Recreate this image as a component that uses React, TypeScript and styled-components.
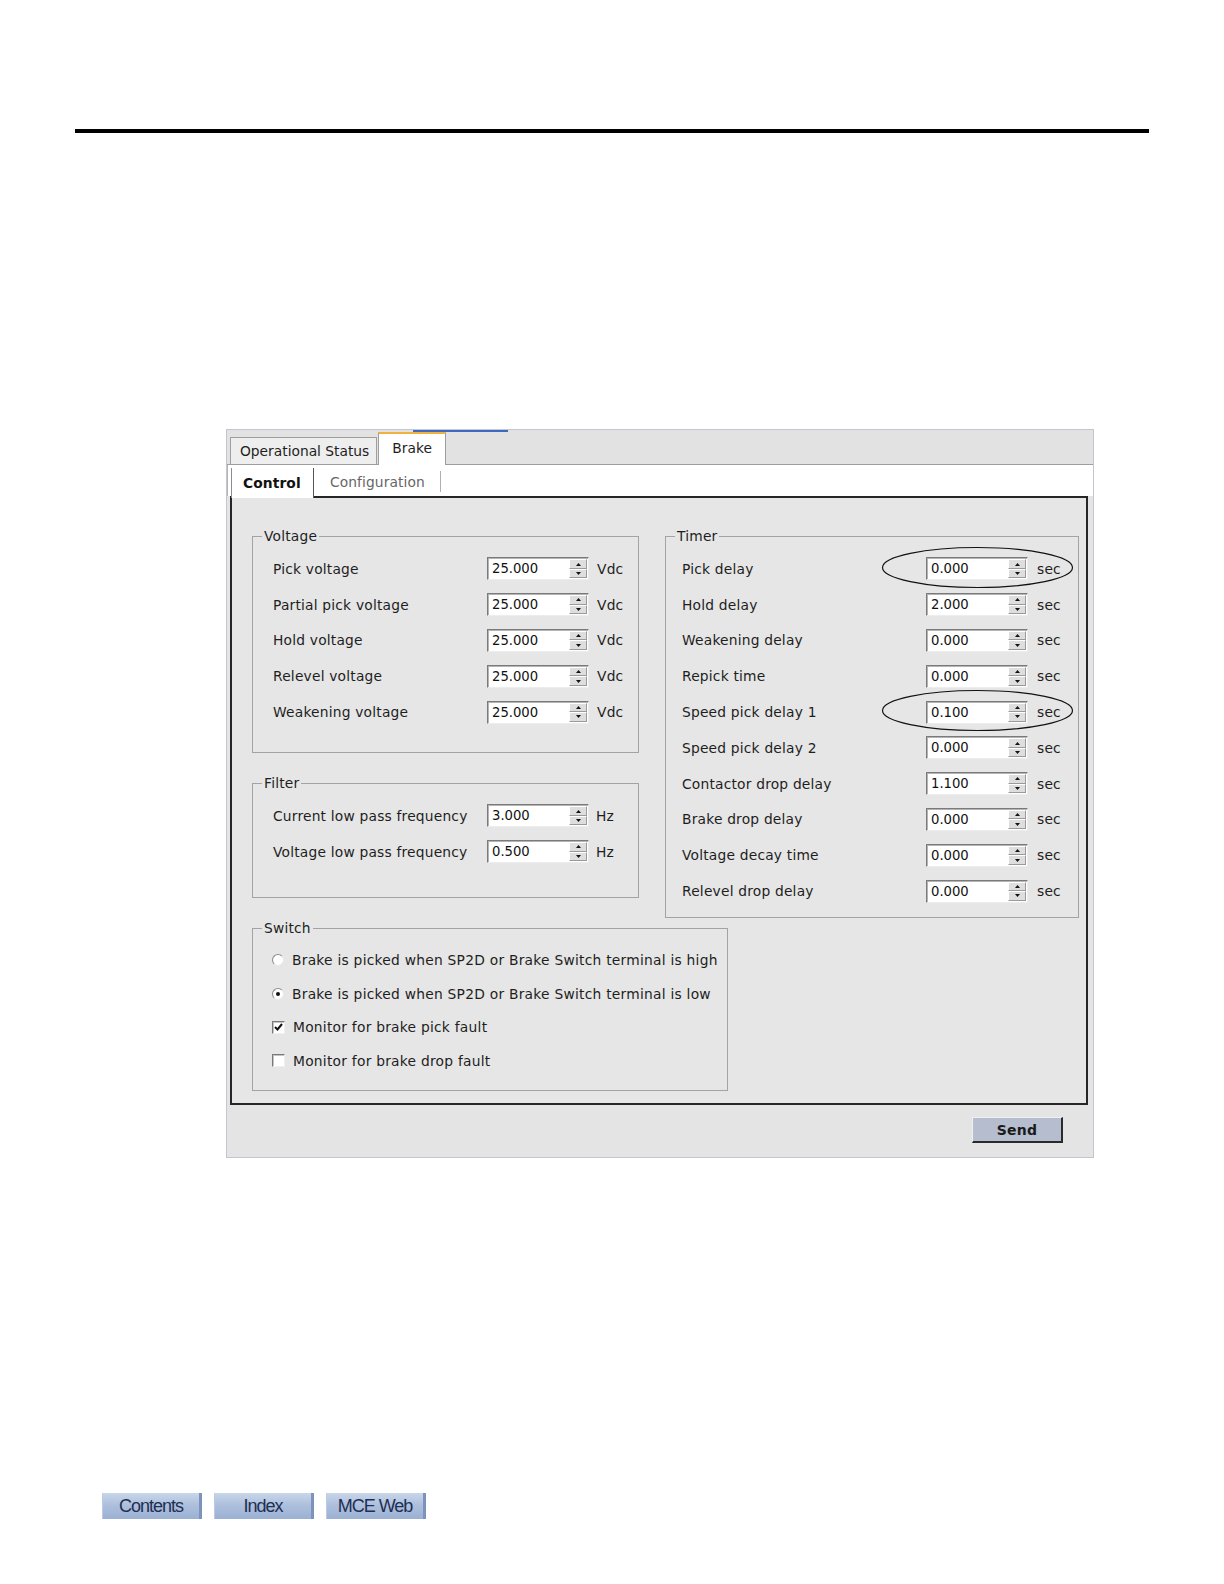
import React from "react";
import styled, { createGlobalStyle } from "styled-components";

const GlobalStyle = createGlobalStyle`
  html, body {
    margin: 0;
    padding: 0;
    background: #ffffff;
  }
  body {
    font-family: "DejaVu Sans", Verdana, sans-serif;
    color: #1e1e1e;
  }
`;

const Page = styled.div`
  width: 1224px;
  height: 1584px;
  padding-top: 129px;
  box-sizing: border-box;
`;

const Rule = styled.div`
  margin-left: 75px;
  width: 1074px;
  height: 4px;
  background: #000;
`;

const Window = styled.div`
  margin: 296px 0 0 226px;
  width: 868px;
  height: 729px;
  box-sizing: border-box;
  border: 1px solid #c3c6d0;
  background: #e4e4e4;
  display: flex;
  flex-direction: column;
  letter-spacing: 0.2px;
`;

const TabStrip = styled.div`
  height: 35px;
  box-sizing: border-box;
  display: flex;
  align-items: flex-end;
  gap: 1px;
  padding-left: 3px;
  border-bottom: 1px solid #9e9e9e;
  background:
    linear-gradient(#3d6ac0, #3d6ac0) no-repeat 186px 0 / 95px 2px,
    #e2e2e2;
`;

const TopTab = styled.div<{ active?: boolean }>`
  display: flex;
  align-items: center;
  box-sizing: border-box;
  font-size: 13.8px;
  letter-spacing: 0;
  color: #1e1e1e;
  border: 1px solid #9e9e9e;
  border-bottom: none;
  ${(p) =>
    p.active
      ? `
    height: 33px;
    margin-bottom: -1px;
    padding: 0 13px 3px 13px;
    background: #ffffff;
    border-top: 2px solid #f0b23c;
  `
      : `
    height: 27px;
    padding: 0 7px 0 9px;
    background: #eeeeee;
  `}
`;

const SubTabBar = styled.div`
  height: 31px;
  display: flex;
  align-items: stretch;
  background: #ffffff;
  padding-left: 3px;
  border-left: 1px solid #b5b5b5;
`;

const SubTab = styled.div<{ active?: boolean }>`
  display: flex;
  align-items: center;
  font-size: 13.8px;
  letter-spacing: 0.1px;
  position: relative;
  z-index: 1;
  ${(p) =>
    p.active
      ? `
    width: 83px;
    box-sizing: border-box;
    padding-left: 11px;
    font-weight: bold;
    color: #111;
    background: #ffffff;
    border-left: 1px solid #8c8c8c;
    border-right: 1px solid #555555;
    margin-top: 3px;
    margin-bottom: -2px;
  `
      : `
    padding: 0 15px 0 16px;
    color: #666666;
    border-right: 1px solid #b0b0b0;
    margin: 6px 0 4px;
  `}
`;

const Panel = styled.div`
  margin: 0 5px 0 3px;
  height: 609px;
  box-sizing: border-box;
  border: 2px solid #262626;
  background: #e6e6e6;
  padding: 30px 7px 0 20px;
  display: flex;
  flex-direction: column;
`;

const TopRow = styled.div`
  display: flex;
  align-items: flex-start;
  gap: 26px;
`;

const LeftCol = styled.div`
  display: flex;
  flex-direction: column;
  gap: 22px;
`;

const Group = styled.fieldset<{ w: number; h: number; top?: number }>`
  margin: ${(p) => p.top || 0}px 0 0 0;
  padding: 0;
  min-width: 0;
  width: ${(p) => p.w}px;
  height: ${(p) => p.h}px;
  box-sizing: border-box;
  border: 1px solid #a3a3a3;
`;

const Legend = styled.legend`
  margin-left: 9px;
  padding: 0 2px;
  font-size: 13.8px;
  line-height: 16px;
  color: #1e1e1e;
`;

const Rows = styled.div<{ gapTop: number }>`
  padding-top: ${(p) => p.gapTop}px;
`;

const Row = styled.div<{ pad: number; h: number }>`
  position: relative;
  display: flex;
  align-items: center;
  height: ${(p) => p.h}px;
  padding-left: ${(p) => p.pad}px;
  font-size: 13.8px;
`;

const Label = styled.span<{ w: number }>`
  width: ${(p) => p.w}px;
  flex: none;
  white-space: nowrap;
`;

const Unit = styled.span<{ gap: number }>`
  margin-left: ${(p) => p.gap}px;
`;

const SpinBox = styled.div`
  width: 102px;
  height: 23px;
  box-sizing: border-box;
  flex: none;
  display: flex;
  align-items: center;
  background: #ffffff;
  border: 1px solid;
  border-color: #7a7a7a #ededed #ededed #7a7a7a;
  box-shadow: inset 1px 1px 0 #b4b4b4;
`;

const SpinValue = styled.span`
  flex: 1;
  padding-left: 4px;
  font-size: 13.2px;
  color: #111;
  letter-spacing: 0;
`;

const Spinner = styled.div`
  width: 18px;
  height: 19px;
  margin-right: 1px;
  display: flex;
  flex-direction: column;
`;

const SpinButton = styled.div`
  flex: 1;
  display: flex;
  align-items: center;
  justify-content: center;
  background: #dedede;
  border: 1px solid;
  border-color: #ffffff #9a9a9a #9a9a9a #ffffff;
`;

const Ellipse = styled.svg`
  position: absolute;
  left: 216px;
  top: -4px;
  width: 191px;
  height: 41px;
  overflow: visible;
  pointer-events: none;
`;

const ChoiceRow = styled.label`
  display: flex;
  align-items: center;
  height: 33.7px;
  padding-left: 19px;
  font-size: 13.8px;
  letter-spacing: 0.25px;
  white-space: nowrap;
`;

const Radio = styled.span<{ checked?: boolean }>`
  width: 12px;
  height: 12px;
  box-sizing: border-box;
  margin-right: 8px;
  border-radius: 50%;
  background: #ffffff;
  border: 1px solid;
  border-color: #8a8a8a #e8e8e8 #e8e8e8 #8a8a8a;
  display: flex;
  align-items: center;
  justify-content: center;
  &::after {
    content: "";
    width: 4px;
    height: 4px;
    border-radius: 50%;
    background: ${(p) => (p.checked ? "#111" : "transparent")};
  }
`;

const Checkbox = styled.span`
  width: 13px;
  height: 13px;
  box-sizing: border-box;
  margin-right: 8px;
  background: #ffffff;
  border: 1px solid;
  border-color: #7a7a7a #f0f0f0 #f0f0f0 #7a7a7a;
  box-shadow: inset 1px 1px 0 #c4c4c4;
  display: flex;
  align-items: center;
  justify-content: center;
`;

const BottomBar = styled.div`
  flex: 1;
  display: flex;
  justify-content: flex-end;
  align-items: flex-start;
  padding: 12px 30px 0 0;
`;

const SendButton = styled.button`
  width: 91px;
  height: 26px;
  padding: 0;
  box-sizing: border-box;
  background: #b5bdce;
  border-style: solid;
  border-width: 1px 2px 2px 1px;
  border-color: #eef0f5 #2a2a2a #2a2a2a #eef0f5;
  font-family: "DejaVu Sans", Verdana, sans-serif;
  font-weight: bold;
  font-size: 14px;
  letter-spacing: 0.2px;
  color: #1a1a1a;
`;

const FooterNav = styled.nav`
  margin: 335px 0 0 102px;
  display: flex;
  gap: 12px;
`;

const NavButton = styled.div`
  width: 100px;
  height: 26px;
  box-sizing: border-box;
  background: linear-gradient(to bottom, #c9d6ea 0%, #adc0dd 45%, #9bb0d3 100%);
  border-left: 1px solid #bccbe2;
  border-right: 3px solid #7d93bb;
  font-family: "Liberation Sans", Arial, sans-serif;
  font-size: 18px;
  letter-spacing: -1px;
  line-height: 26px;
  text-align: center;
  color: #1f2f52;
`;

type Field = { label: string; value: string; circled?: boolean };

const voltage: Field[] = [
  { label: "Pick voltage", value: "25.000" },
  { label: "Partial pick voltage", value: "25.000" },
  { label: "Hold voltage", value: "25.000" },
  { label: "Relevel voltage", value: "25.000" },
  { label: "Weakening voltage", value: "25.000" },
];

const filter: Field[] = [
  { label: "Current low pass frequency", value: "3.000" },
  { label: "Voltage low pass frequency", value: "0.500" },
];

const timer: Field[] = [
  { label: "Pick delay", value: "0.000", circled: true },
  { label: "Hold delay", value: "2.000" },
  { label: "Weakening delay", value: "0.000" },
  { label: "Repick time", value: "0.000" },
  { label: "Speed pick delay 1", value: "0.100", circled: true },
  { label: "Speed pick delay 2", value: "0.000" },
  { label: "Contactor drop delay", value: "1.100" },
  { label: "Brake drop delay", value: "0.000" },
  { label: "Voltage decay time", value: "0.000" },
  { label: "Relevel drop delay", value: "0.000" },
];

const Arrow = ({ up }: { up?: boolean }) => (
  <svg width="5" height="3" viewBox="0 0 5 3">
    <polygon points={up ? "2.5,0 5,3 0,3" : "0,0 5,0 2.5,3"} fill="#111" />
  </svg>
);

const NumberField = ({ value }: { value: string }) => (
  <SpinBox>
    <SpinValue>{value}</SpinValue>
    <Spinner>
      <SpinButton>
        <Arrow up />
      </SpinButton>
      <SpinButton>
        <Arrow />
      </SpinButton>
    </Spinner>
  </SpinBox>
);

const FieldRows = ({
  fields,
  unit,
  pad,
  labelWidth,
  unitGap,
}: {
  fields: Field[];
  unit: string;
  pad: number;
  labelWidth: number;
  unitGap: number;
}) => (
  <Rows gapTop={7}>
    {fields.map((f) => (
      <Row key={f.label} pad={pad} h={35.8}>
        <Label w={labelWidth}>{f.label}</Label>
        <NumberField value={f.value} />
        <Unit gap={unitGap}>{unit}</Unit>
        {f.circled && (
          <Ellipse viewBox="0 0 191 41">
            <ellipse cx="95.5" cy="20.5" rx="95" ry="20" fill="none" stroke="#111" strokeWidth="1.2" />
          </Ellipse>
        )}
      </Row>
    ))}
  </Rows>
);

export default function App() {
  return (
    <Page>
      <GlobalStyle />
      <Rule />
      <Window>
        <TabStrip>
          <TopTab>Operational Status</TopTab>
          <TopTab active>Brake</TopTab>
        </TabStrip>
        <SubTabBar>
          <SubTab active>Control</SubTab>
          <SubTab>Configuration</SubTab>
        </SubTabBar>
        <Panel>
          <TopRow>
            <LeftCol>
              <Group w={387} h={225}>
                <Legend>Voltage</Legend>
                <FieldRows fields={voltage} unit="Vdc" pad={20} labelWidth={214} unitGap={8} />
              </Group>
              <Group w={387} h={123}>
                <Legend>Filter</Legend>
                <FieldRows fields={filter} unit="Hz" pad={20} labelWidth={214} unitGap={7} />
              </Group>
            </LeftCol>
            <Group w={414} h={390}>
              <Legend>Timer</Legend>
              <FieldRows fields={timer} unit="sec" pad={16} labelWidth={244} unitGap={9} />
            </Group>
          </TopRow>
          <Group w={476} h={171} top={2}>
            <Legend>Switch</Legend>
            <Rows gapTop={7}>
              <ChoiceRow>
                <Radio />
                Brake is picked when SP2D or Brake Switch terminal is high
              </ChoiceRow>
              <ChoiceRow>
                <Radio checked />
                Brake is picked when SP2D or Brake Switch terminal is low
              </ChoiceRow>
              <ChoiceRow>
                <Checkbox>
                  <svg width="9" height="8" viewBox="0 0 9 8">
                    <polyline points="1,4 3.5,6.5 8,1" fill="none" stroke="#111" strokeWidth="2" />
                  </svg>
                </Checkbox>
                Monitor for brake pick fault
              </ChoiceRow>
              <ChoiceRow>
                <Checkbox />
                Monitor for brake drop fault
              </ChoiceRow>
            </Rows>
          </Group>
        </Panel>
        <BottomBar>
          <SendButton>Send</SendButton>
        </BottomBar>
      </Window>
      <FooterNav>
        <NavButton>Contents</NavButton>
        <NavButton>Index</NavButton>
        <NavButton>MCE Web</NavButton>
      </FooterNav>
    </Page>
  );
}
